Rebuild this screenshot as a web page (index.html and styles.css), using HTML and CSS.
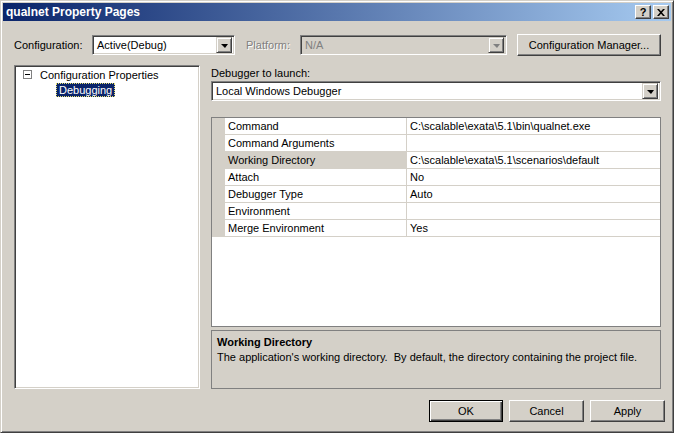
FILE: index.html
```html
<!DOCTYPE html>
<html>
<head>
<meta charset="utf-8">
<link rel="stylesheet" href="styles.css">
</head>
<body>
<div class="window">
  <div class="titlebar">
    <span class="title">qualnet Property Pages</span>
    <div class="tbtns">
      <span class="tbtn">?</span>
      <span class="tbtn">
        <svg width="8" height="7" viewBox="0 0 8 7"><path d="M0 0h2l2 2.2L6 0h2L5 3.5 8 7H6L4 4.8 2 7H0l3-3.5z" fill="#000"/></svg>
      </span>
    </div>
  </div>
  <div class="content">
    <div class="configrow">
      <span class="lbl cfg-lbl">Configuration:</span>
      <div class="combo cfg-combo">
        <span class="combo-text">Active(Debug)</span>
        <span class="dd"><span class="tri"></span></span>
      </div>
      <span class="lbl disabled plat-lbl">Platform:</span>
      <div class="combo plat-combo off">
        <span class="combo-text">N/A</span>
        <span class="dd"><span class="tri"></span></span>
      </div>
      <button class="btn mgr">Configuration Manager...</button>
    </div>
    <div class="main">
      <div class="tree">
        <div class="node">
          <span class="minus"><span class="bar"></span></span>
          <span class="node-text">Configuration Properties</span>
        </div>
        <div class="node child">
          <span class="node-text sel">Debugging</span>
        </div>
      </div>
      <div class="right">
        <div class="lbl launch-lbl">Debugger to launch:</div>
        <div class="combo dbg-combo">
          <span class="combo-text">Local Windows Debugger</span>
          <span class="dd"><span class="tri"></span></span>
        </div>
        <div class="grid">
          <div class="row"><span class="gut"></span><span class="name">Command</span><span class="val">C:\scalable\exata\5.1\bin\qualnet.exe</span></div>
          <div class="row"><span class="gut"></span><span class="name">Command Arguments</span><span class="val"></span></div>
          <div class="row"><span class="gut"></span><span class="name hl">Working Directory</span><span class="val">C:\scalable\exata\5.1\scenarios\default</span></div>
          <div class="row"><span class="gut"></span><span class="name">Attach</span><span class="val">No</span></div>
          <div class="row"><span class="gut"></span><span class="name">Debugger Type</span><span class="val">Auto</span></div>
          <div class="row"><span class="gut"></span><span class="name">Environment</span><span class="val"></span></div>
          <div class="row"><span class="gut"></span><span class="name">Merge Environment</span><span class="val">Yes</span></div>
        </div>
        <div class="desc">
          <div class="desc-title">Working Directory</div>
          <div class="desc-text">The application's working directory.&nbsp; By default, the directory containing the project file.</div>
        </div>
      </div>
    </div>
    <div class="buttons">
      <button class="btn def">OK</button>
      <button class="btn">Cancel</button>
      <button class="btn">Apply</button>
    </div>
  </div>
</div>
</body>
</html>
```
FILE: styles.css
```css
* { box-sizing: border-box; }
html, body { margin: 0; padding: 0; background: #d4d0c8; }
body { font-family: "Liberation Sans", Arial, sans-serif; font-size: 11px; color: #000; }

.window {
  width: 674px; height: 433px;
  background: #d4d0c8;
  border: 1px solid; border-color: #d4d0c8 #404040 #404040 #d4d0c8;
  box-shadow: inset 1px 1px #fff, inset -1px -1px #808080;
  padding: 2px;
  display: flex; flex-direction: column;
}

.titlebar {
  height: 18px;
  background: linear-gradient(to right, #0a246a, #a6caf0);
  display: flex; align-items: center; justify-content: space-between;
  padding: 0 2px 0 3px;
}
.title { color: #fff; font-weight: bold; font-size: 12px; font-family: "Liberation Sans", Arial, sans-serif; }
.tbtns { display: flex; gap: 2px; }
.tbtn {
  width: 16px; height: 14px;
  background: #d4d0c8;
  border: 1px solid; border-color: #fff #404040 #404040 #fff;
  box-shadow: inset -1px -1px #808080;
  display: flex; align-items: center; justify-content: center;
  font-weight: bold; font-size: 11px; line-height: 1;
}

.content { flex: 1; display: flex; flex-direction: column; padding: 0 10px 0 11px; }

.configrow { display: flex; align-items: center; height: 22px; margin-top: 13px; }
.lbl { white-space: nowrap; }
.cfg-lbl { width: 78px; }
.disabled { color: #808080; text-shadow: 1px 1px #fff; }
.plat-lbl { width: 54px; }

.combo {
  height: 20px; background: #fff;
  border: 1px solid; border-color: #808080 #fff #fff #808080;
  box-shadow: inset 1px 1px #404040, inset -1px -1px #d4d0c8;
  display: flex; align-items: center; padding: 2px 2px 2px 4px;
}
.combo-text { flex: 1; white-space: nowrap; }
.combo.off { background: #d4d0c8; color: #808080; }
.dd {
  width: 16px; height: 16px; flex: none;
  background: #d4d0c8;
  border: 1px solid; border-color: #d4d0c8 #404040 #404040 #d4d0c8;
  box-shadow: inset 1px 1px #fff, inset -1px -1px #808080;
  display: flex; align-items: center; justify-content: center;
}
.tri { width: 0; height: 0; border-left: 4px solid transparent; border-right: 3px solid transparent; border-top: 4px solid #000; margin-top: 1px; }
.off .tri { border-top-color: #808080; }
.cfg-combo { width: 143px; margin-left: 0; margin-right: 11px; }
.plat-combo { width: 207px; margin-right: 10px; }

.btn {
  font-family: inherit; font-size: 11px; color: #000;
  background: #d4d0c8; height: 22px; padding: 0;
  border: 1px solid; border-color: #fff #404040 #404040 #fff;
  box-shadow: inset -1px -1px #808080;
}
.mgr { width: 144px; }

.main { display: flex; margin-top: 9px; height: 324px; gap: 11px; }
.tree {
  width: 186px; background: #fff;
  border: 1px solid; border-color: #808080 #fff #fff #808080;
  box-shadow: inset 1px 1px #404040, inset -1px -1px #d4d0c8;
  padding: 1px 0 0 8px;
}
.node { display: flex; align-items: center; height: 15px; }
.minus {
  width: 9px; height: 9px; border: 1px solid #808080; background: #fff;
  display: flex; align-items: center; justify-content: center; margin-right: 6px;
}
.bar { width: 5px; height: 1px; background: #000; }
.node-text { padding: 1px 2px; white-space: nowrap; }
.child { padding-left: 33px; height: 16px; }
.sel { background: #0a246a; color: #fff; outline: 1px dotted #e8e070; outline-offset: -1px; padding: 1px 3px; }

.right { width: 450px; display: flex; flex-direction: column; }
.launch-lbl { height: 16px; line-height: 16px; }
.dbg-combo { width: 450px; }

.grid {
  flex: 1; margin-top: 16px; background: #fff; border: 1px solid #808080;
}
.row { display: flex; height: 17px; }
.gut { width: 13px; background: #d4d0c8; flex: none; }
.name {
  width: 182px; flex: none; padding: 1px 3px 0; line-height: 15px;
  border-bottom: 1px solid #d4d0c8; border-right: 1px solid #d4d0c8; white-space: nowrap;
}
.name.hl { background: #d4d0c8; }
.val { flex: 1; padding: 1px 3px 0; line-height: 15px; border-bottom: 1px solid #d4d0c8; white-space: nowrap; }

.desc {
  height: 59px; margin-top: 3px; border: 1px solid #808080; padding: 4px 5px;
}
.desc-title { font-weight: bold; line-height: 14px; }
.desc-text { line-height: 14px; margin-top: 1px; white-space: nowrap; }

.buttons { display: flex; justify-content: flex-end; margin-top: 11px; margin-right: -4px; }
.buttons .btn { width: 75px; }
.buttons .btn + .btn { margin-left: 6px; }
.btn.def { width: 74px; border: 1px solid #000; box-shadow: inset 1px 1px #fff, inset -1px -1px #404040, inset -2px -2px #808080; }
```
